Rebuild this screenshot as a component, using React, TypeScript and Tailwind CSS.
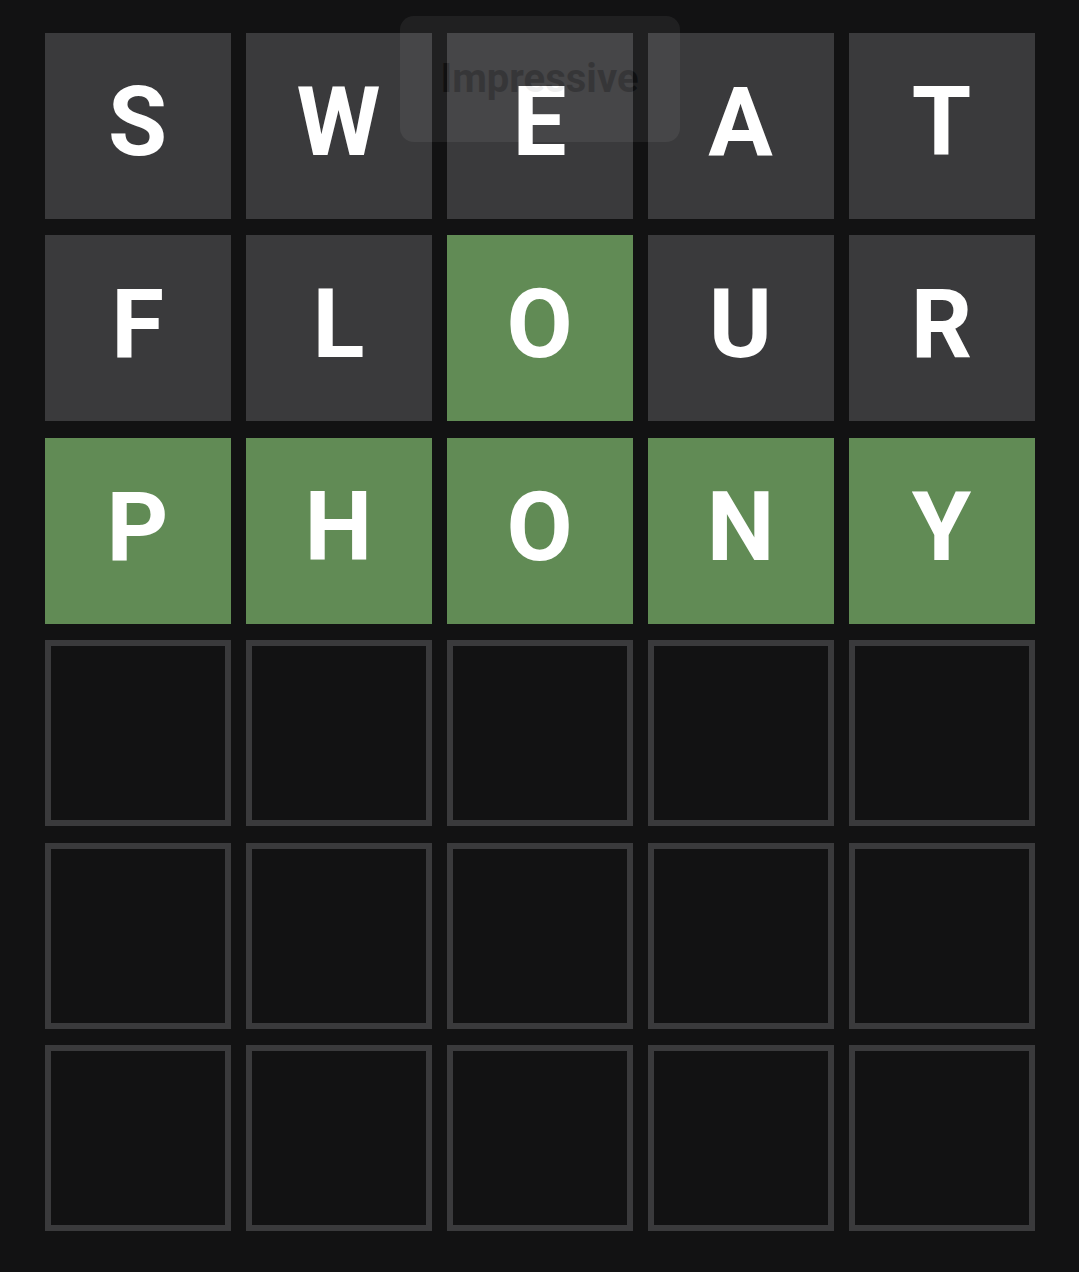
const rows: { letter: string; state: 'absent' | 'correct' }[][] = [
  [
    { letter: 'S', state: 'absent' },
    { letter: 'W', state: 'absent' },
    { letter: 'E', state: 'absent' },
    { letter: 'A', state: 'absent' },
    { letter: 'T', state: 'absent' },
  ],
  [
    { letter: 'F', state: 'absent' },
    { letter: 'L', state: 'absent' },
    { letter: 'O', state: 'correct' },
    { letter: 'U', state: 'absent' },
    { letter: 'R', state: 'absent' },
  ],
  [
    { letter: 'P', state: 'correct' },
    { letter: 'H', state: 'correct' },
    { letter: 'O', state: 'correct' },
    { letter: 'N', state: 'correct' },
    { letter: 'Y', state: 'correct' },
  ],
]

const App = () => {
  const empty = Array.from({ length: 3 }, () => Array(5).fill(null))
  return (
    <div className="relative flex min-h-[1272px] w-full justify-center bg-[#121213] pt-[33px] font-['Roboto','Liberation_Sans',sans-serif]">
      <div className="grid grid-cols-[repeat(5,186px)] grid-rows-[repeat(6,186px)] gap-x-[15px] gap-y-[16.4px]">
        {rows.map((row, r) =>
          row.map((tile, c) => (
            <div
              key={`${r}-${c}`}
              className={`flex items-center justify-center pb-[8px] text-[96px] font-bold leading-none text-white ${
                tile.state === 'correct' ? 'bg-[#618b55]' : 'bg-[#3a3a3c]'
              }`}
            >
              {tile.letter}
            </div>
          ))
        )}
        {empty.map((row, r) =>
          row.map((_, c) => (
            <div key={`e-${r}-${c}`} className="border-[6px] border-[#3a3a3c]" />
          ))
        )}
      </div>
      <div className="absolute left-1/2 top-4 flex h-[126px] w-[280px] -translate-x-1/2 items-center justify-center rounded-[14px] bg-white opacity-[0.06]">
        <span className="text-[40px] font-bold text-black">Impressive</span>
      </div>
    </div>
  )
}

export default App
